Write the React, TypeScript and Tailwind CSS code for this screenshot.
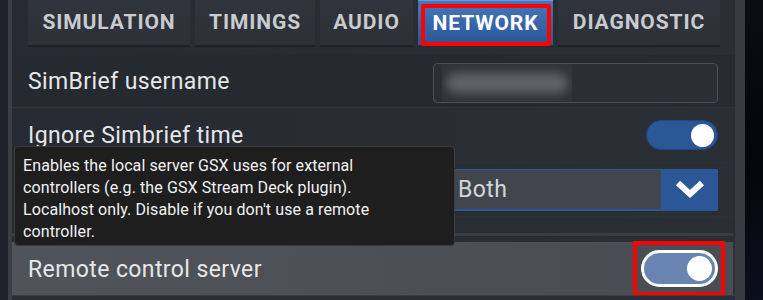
import React from "react";

const font = { fontFamily: "Roboto, 'Noto Sans', Arial, sans-serif" } as React.CSSProperties;

function Tab({ label, w, active }: { label: string; w: string; active?: boolean }) {
  if (active) {
    return (
      <div className={`${w} relative flex items-center justify-center bg-gradient-to-b from-[#4677bd] to-[#2b5598] border-t border-[#6d96d2]`}>
        <div className="absolute left-[3px] right-[2px] top-[3px] bottom-[-1px] border-[4px] border-[#ff0000] rounded-[2px]" />
        <span className="text-[21px] font-bold tracking-[0.9px] text-white leading-none">{label}</span>
      </div>
    );
  }
  return (
    <div className={`${w} flex items-center justify-center bg-gradient-to-b from-[#30343c] to-[#2c3037] shadow-[0_2px_0_#1d2026]`}>
      <span className="text-[21px] font-bold tracking-[0.9px] text-[#c9cbce] leading-none">{label}</span>
    </div>
  );
}

export default function App() {
  return (
    <div className="w-[763px] h-[300px] flex overflow-hidden relative bg-[#1d2129]" style={font}>
      <div className="w-[8px] bg-[#1d2129]" />
      <div className="w-[4px] bg-[#3a3e45]" />
      <div className="flex-1 flex flex-col bg-gradient-to-r from-[#262a32] to-[#2a2e35]">
        {/* tabs */}
        <div className="h-[45px] flex gap-[5px] pl-[16px] pr-[15px]">
          <Tab label="SIMULATION" w="w-[162px]" />
          <Tab label="TIMINGS" w="w-[120px]" />
          <Tab label="AUDIO" w="w-[93px]" />
          <Tab label="NETWORK" w="w-[135px]" active />
          <Tab label="DIAGNOSTIC" w="w-[162px]" />
        </div>
        <div className="h-[10px]" />
        {/* row 1 */}
        <div className="h-[53px] flex items-center justify-between pl-[16px] pr-[17px] border-b border-[#2f333b] bg-gradient-to-r from-[#252930] to-[#262a31]">
          <span className="text-[23px] tracking-[0.4px] text-[#e6e7e9] mt-[3px]">SimBrief username</span>
          <div className="w-[285px] h-[40px] rounded-[4px] border border-[#4a4e56] bg-[#2a2e35] flex items-center pl-[8px] mt-[3px]">
            <div className="w-[130px] h-[38px] bg-[#30343b] flex items-center pl-[4px] overflow-hidden">
              <div className="w-[122px] h-[20px] rounded-full bg-[#5e6268] blur-[5px]" />
            </div>
          </div>
        </div>
        {/* row 2 */}
        <div className="h-[55px] flex items-center justify-between pl-[16px] pr-[17px] border-b border-[#2c3037]">
          <span className="text-[23px] tracking-[0.4px] text-[#e6e7e9] mt-[3px]">Ignore Simbrief time</span>
          <div className="w-[72px] h-[30px] rounded-full bg-[#2b5796] border border-[#1e4682] flex items-center justify-end pr-[3px]">
            <div className="w-[23px] h-[23px] rounded-full bg-white" />
          </div>
        </div>
        {/* row 3 */}
        <div className="h-[54px] flex items-center justify-end pl-[16px] pr-[17px] border-b border-[#2c3037]">
          <div className="w-[285px] h-[42px] flex border-t border-[#2b5797] border-b-2 border-b-[#2b5797]">
            <div className="flex-1 bg-[#41464e] flex items-center pl-[25px]">
              <span className="text-[23px] tracking-[0.4px] text-[#d4d6d9] mt-[3px]">Both</span>
            </div>
            <div className="w-[57px] bg-[#2b5797] flex items-center justify-center">
              <svg width="30" height="18" viewBox="0 0 30 18">
                <path d="M3 3 L15 14 L27 3" fill="none" stroke="white" strokeWidth="6" strokeLinejoin="miter" />
              </svg>
            </div>
          </div>
        </div>
        {/* spacer with line */}
        <div className="h-[25px] flex flex-col">
          <div className="h-[16px]" />
          <div className="h-[3px] mr-[2px] bg-[#393d45]" />
        </div>
        {/* row 4 */}
        <div className="h-[53px] flex items-center justify-between pl-[16px] pr-[8px] mr-[2px] bg-gradient-to-r from-[#50535a] to-[#494c53]">
          <span className="text-[23px] tracking-[0.4px] text-[#e6e7e9] mt-[3px]">Remote control server</span>
          <div className="w-[92px] h-[55px] border-[4px] border-[#ff0000] flex items-center justify-center">
            <div className="w-[77px] h-[37px] rounded-full border-[3px] border-white bg-[#6885b2] flex items-center justify-end pr-[3px]">
              <div className="w-[25px] h-[25px] rounded-full bg-white" />
            </div>
          </div>
        </div>
        <div className="flex-1 bg-[#2a2e35] border-t border-[#383c43]" />
      </div>
      <div className="w-[10px] bg-[#383b41]" />
      <div className="w-[18px] bg-gradient-to-b from-[#0b0d14] via-[#05060a] to-[#0a0f1c]" />

      {/* tooltip */}
      <div className="absolute left-[14px] top-[146px] w-[441px] h-[100px] bg-[#1e1e1e] border border-[#3c3c3c] rounded-[4px] pl-[8px] pt-[8px] text-[16px] tracking-[0.1px] leading-[22px] text-[#f2f2f2]">
        Enables the local server GSX uses for external
        <br />
        controllers (e.g. the GSX Stream Deck plugin).
        <br />
        Localhost only. Disable if you don't use a remote
        <br />
        controller.
      </div>
    </div>
  );
}
